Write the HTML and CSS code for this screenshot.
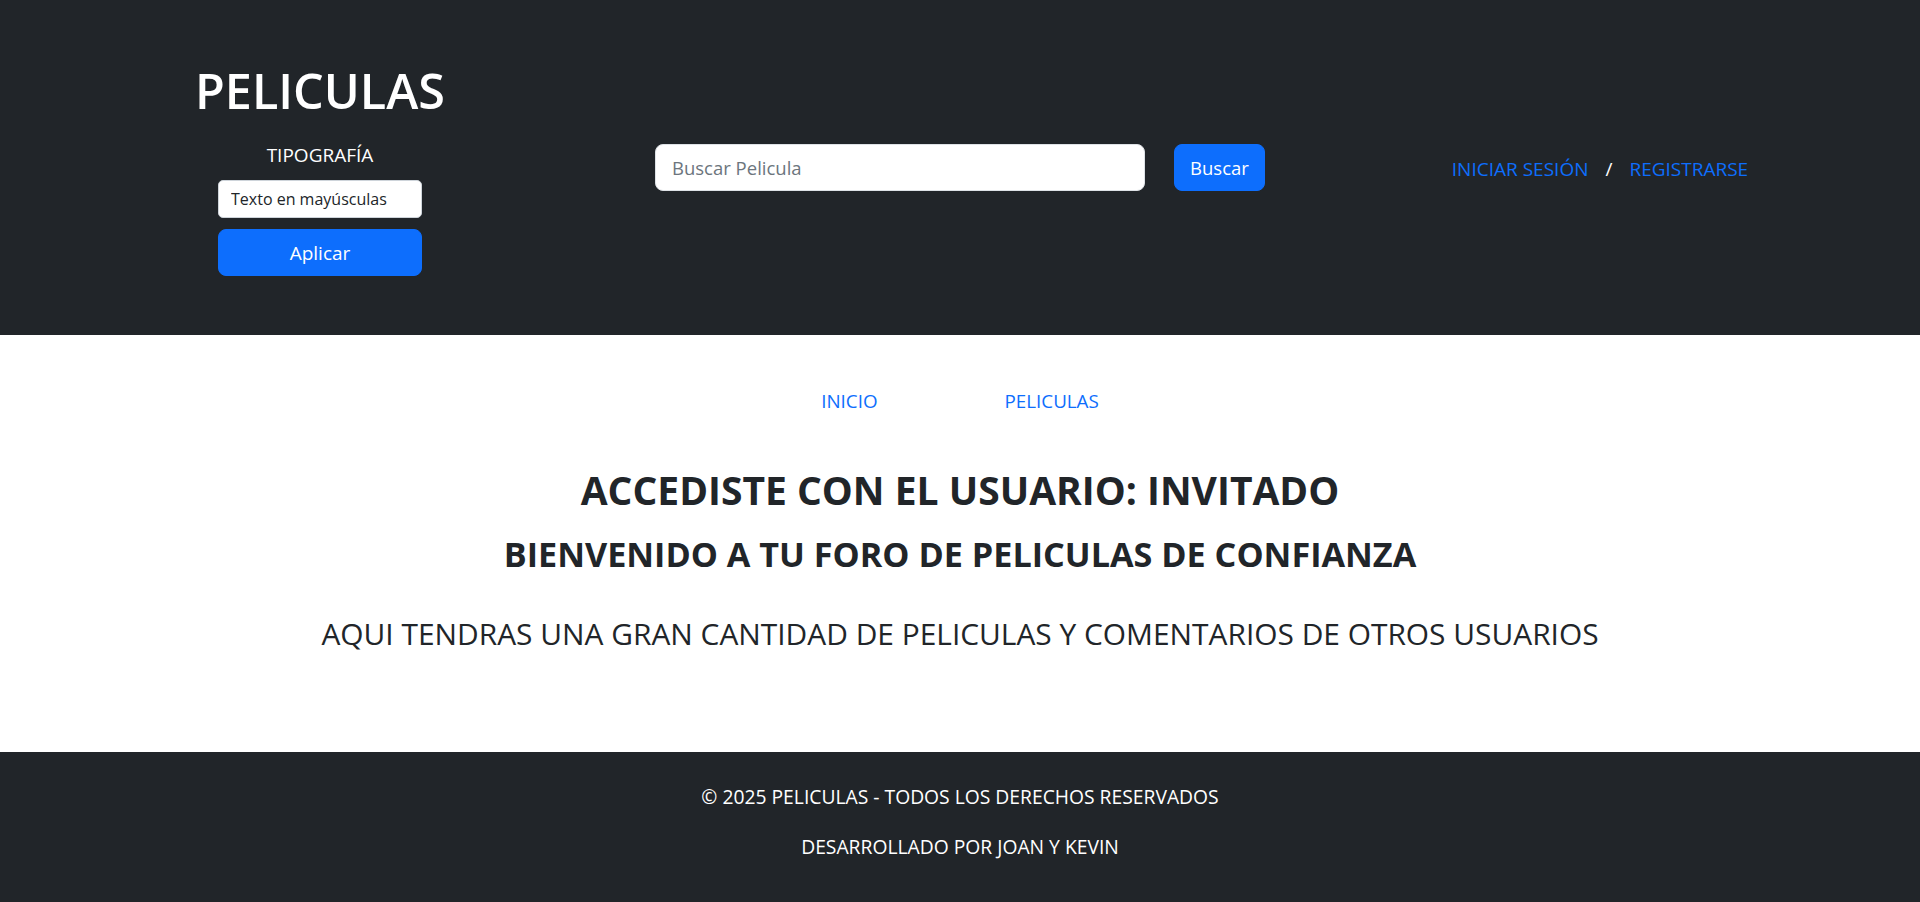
FILE: index.html
```html
<!DOCTYPE html>
<html lang="es">
<head>
<meta charset="utf-8">
<title>Peliculas</title>
<link rel="stylesheet" href="styles.css">
</head>
<body>
<header class="site-header">
  <div class="header-col brand-col">
    <h1 class="brand">PELICULAS</h1>
    <label class="typo-label" for="typo">TIPOGRAFÍA</label>
    <select id="typo" class="typo-select">
      <option>Texto en mayúsculas</option>
      <option>Texto normal</option>
    </select>
    <button class="btn btn-apply" type="button">Aplicar</button>
  </div>
  <form class="header-col search-col">
    <input class="search-input" type="text" placeholder="Buscar Pelicula">
    <button class="btn btn-search" type="button">Buscar</button>
  </form>
  <div class="header-col auth-col">
    <a class="auth-link" href="#">INICIAR SESIÓN</a>
    <span class="auth-sep">/</span>
    <a class="auth-link" href="#">REGISTRARSE</a>
  </div>
</header>

<main class="main">
  <nav class="main-nav">
    <a class="nav-link" href="#">INICIO</a>
    <a class="nav-link" href="#">PELICULAS</a>
  </nav>
  <h2 class="title-user">ACCEDISTE CON EL USUARIO: INVITADO</h2>
  <h3 class="title-welcome">BIENVENIDO A TU FORO DE PELICULAS DE CONFIANZA</h3>
  <p class="intro">AQUI TENDRAS UNA GRAN CANTIDAD DE PELICULAS Y COMENTARIOS DE OTROS USUARIOS</p>
</main>

<footer class="site-footer">
  <p class="footer-line">© 2025 PELICULAS - TODOS LOS DERECHOS RESERVADOS</p>
  <p class="footer-line">DESARROLLADO POR JOAN Y KEVIN</p>
</footer>
</body>
</html>
```
FILE: styles.css
```css
* { box-sizing: border-box; }

html, body {
  margin: 0;
  padding: 0;
}

body {
  font-family: "Open Sans", "Noto Sans", sans-serif;
  color: #212529;
  background: #fff;
}

a { text-decoration: none; }

/* ---------- header ---------- */
.site-header {
  height: 335px;
  background: #212529;
  display: flex;
  align-items: center;
}

.header-col {
  flex: 1 1 0;
  display: flex;
  align-items: center;
  justify-content: center;
}

.brand-col {
  flex-direction: column;
  margin-top: 3px;
}

.brand {
  margin: 0;
  font-size: 48.5px;
  font-weight: 600;
  line-height: 56px;
  color: #fff;
}

.typo-label {
  margin-top: 25px;
  font-size: 19px;
  line-height: 24px;
  color: #fff;
}

.typo-select {
  margin-top: 13px;
  width: 204px;
  height: 38px;
  padding: 0 12px;
  font-family: inherit;
  font-size: 16px;
  color: #212529;
  background: #fff;
  border: 1px solid #ced4da;
  border-radius: 5px;
  appearance: none;
  -webkit-appearance: none;
}

.btn {
  font-family: inherit;
  color: #fff;
  background: #0d6efd;
  border: 1px solid #0d6efd;
  border-radius: 8px;
  cursor: pointer;
}

.btn-apply {
  margin-top: 11px;
  width: 204px;
  height: 47px;
  font-size: 19px;
}

.search-col {
  margin: 0;
  gap: 29px;
}

.search-input {
  width: 490px;
  height: 47px;
  padding: 0 16px;
  font-family: inherit;
  font-size: 18.5px;
  color: #212529;
  background: #fff;
  border: 1px solid #dee2e6;
  border-radius: 8px;
}

.search-input::placeholder { color: #6c757d; }

.btn-search {
  width: 91px;
  height: 47px;
  padding: 0;
  font-size: 18.5px;
}

.auth-col {
  gap: 17px;
  margin-top: 3px;
  font-size: 19px;
  line-height: 24px;
}

.auth-link { color: #0d6efd; }
.auth-sep { color: #fff; }

/* ---------- main ---------- */
.main {
  height: 417px;
  padding-top: 54px;
  text-align: center;
}

.main-nav {
  display: flex;
  justify-content: center;
  gap: 127px;
  font-size: 18.8px;
  line-height: 24px;
}

.nav-link { color: #0d6efd; }

.title-user {
  margin: 53px 0 0;
  font-size: 39px;
  font-weight: 700;
  line-height: 47px;
}

.title-welcome {
  margin: 20px 0 0;
  font-size: 34.2px;
  font-weight: 700;
  line-height: 41px;
}

.intro {
  margin: 42px 0 0;
  font-size: 29.9px;
  font-weight: 400;
  line-height: 36px;
}

/* ---------- footer ---------- */
.site-footer {
  height: 150px;
  padding-top: 33px;
  background: #212529;
  color: #fff;
  text-align: center;
}

.footer-line {
  margin: 0;
  font-size: 19.3px;
  line-height: 24px;
}

.footer-line + .footer-line { margin-top: 26px; }
```
